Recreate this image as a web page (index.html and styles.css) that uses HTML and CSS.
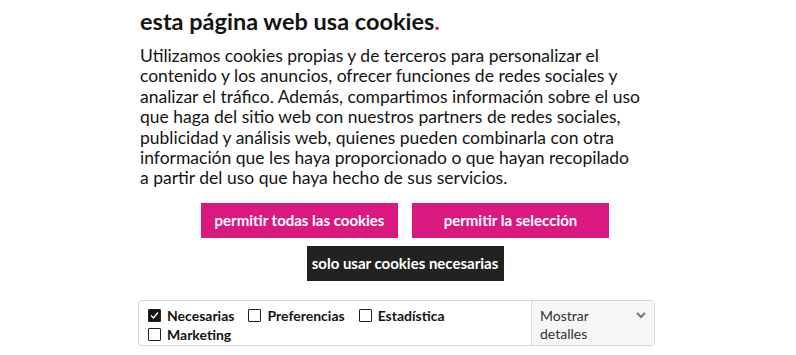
FILE: index.html
```html
<!DOCTYPE html>
<html lang="es">
<head>
    <meta charset="UTF-8">
    <meta name="viewport" content="width=device-width, initial-scale=1.0">
    <title>Cookies</title>
    <link rel="stylesheet" href="styles.css">
</head>
<body>
    <div class="banner">
        <h2 class="title">esta página web usa cookies<span class="dot">.</span></h2>
        <p class="text">Utilizamos cookies propias y de terceros para personalizar el contenido y los anuncios, ofrecer funciones de redes sociales y analizar el tráfico. Además, compartimos información sobre el uso que haga del sitio web con nuestros partners de redes sociales, publicidad y análisis web, quienes pueden combinarla con otra información que les haya proporcionado o que hayan recopilado a&nbsp;partir del uso que haya hecho de sus servicios.</p>

        <div class="buttons">
            <button class="btn btn-pink">permitir todas las cookies</button>
            <button class="btn btn-pink">permitir la selección</button>
            <button class="btn btn-dark">solo usar cookies necesarias</button>
        </div>

        <div class="details">
            <div class="checks">
                <label class="check"><span class="box checked"><svg width="11" height="11" viewBox="0 0 11 11"><path d="M2 5.5 L4.5 8 L9 2.5" fill="none" stroke="#fff" stroke-width="1.4"/></svg></span>Necesarias</label>
                <label class="check"><span class="box"></span>Preferencias</label>
                <label class="check"><span class="box"></span>Estadística</label>
                <label class="check"><span class="box"></span>Marketing</label>
            </div>
            <div class="show">
                <span>Mostrar<br>detalles</span>
                <svg class="chevron" width="10" height="7" viewBox="0 0 10 7"><path d="M1 1 L5 5 L9 1" fill="none" stroke="#777" stroke-width="2"/></svg>
            </div>
        </div>
    </div>
</body>
</html>
```

FILE: styles.css
```css
body {
    margin: 0;
    background: #fff;
    color: #141414;
    font-family: Lato, "Open Sans", sans-serif;
}
.banner {
    width: 532px;
    margin-left: 138px;
}
.title {
    margin: 0;
    padding: 6px 0 0 2px;
    font-size: 23.5px;
    font-weight: 700;
    line-height: 30px;
}
.dot {
    color: #d9197f;
}
.text {
    margin: 10px 0 0 0;
    padding-left: 2px;
    font-size: 17.5px;
    line-height: 20.4px;
    width: 520px;
}
.buttons {
    display: flex;
    flex-wrap: wrap;
    justify-content: center;
    gap: 8px 14px;
    margin-top: 14px;
    padding-left: 2px;
    width: 530px;
}
.btn {
    width: 197px;
    height: 35px;
    padding: 0;
    border: none;
    color: #fff;
    font-family: Lato, "Open Sans", sans-serif;
    font-size: 15px;
    font-weight: 700;
    white-space: nowrap;
    cursor: pointer;
}
.btn-pink {
    background: #d9197f;
}
.btn-dark {
    background: #222;
}
.details {
    display: flex;
    width: 515px;
    height: 44px;
    margin-top: 19px;
    border: 1px solid #d6d6d6;
    border-radius: 4px;
    overflow: hidden;
}
.checks {
    flex: 1;
    display: flex;
    flex-wrap: wrap;
    align-content: flex-start;
    gap: 0 12px;
    padding: 5px 10px 0 9px;
}
.check {
    display: flex;
    align-items: center;
    gap: 6px;
    font-size: 14px;
    font-weight: 700;
    line-height: 19px;
    margin-right: 2px;
}
.box {
    display: inline-flex;
    align-items: center;
    justify-content: center;
    width: 11px;
    height: 11px;
    border: 1px solid #222;
    border-radius: 1px;
}
.box.checked {
    background: #141414;
}
.show {
    box-sizing: border-box;
    width: 123px;
    display: flex;
    justify-content: space-between;
    align-items: flex-start;
    padding: 6px 8px 0 8px;
    background: #f6f6f6;
    border-left: 1px solid #d6d6d6;
    font-size: 14px;
    line-height: 18px;
    color: #333;
}
.chevron {
    margin-top: 5px;
}
```
